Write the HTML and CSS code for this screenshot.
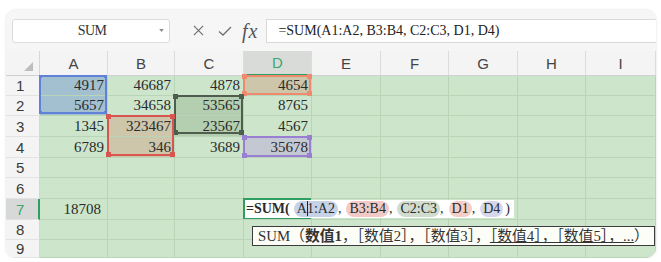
FILE: index.html
```html
<!DOCTYPE html>
<html lang="zh-CN">
<head>
    <meta charset="UTF-8">
    <title>SUM</title>
    <link rel="stylesheet" href="styles.css">
</head>
<body>
<div class="card">
    <div class="toolbar">
        <div class="namebox">
            <span class="name">SUM</span>
            <svg class="caret" viewBox="0 0 6 4"><path d="M0 0H6L3 4Z"/></svg>
        </div>
        <div class="tools">
            <svg class="icon icon-x" viewBox="0 0 12 12"><path d="M1 1L11 11M11 1L1 11"/></svg>
            <svg class="icon icon-ok" viewBox="0 0 14 10"><path d="M1 5.5L5 9L13 1"/></svg>
            <span class="fx">fx</span>
        </div>
        <div class="formula">=SUM(A1:A2, B3:B4, C2:C3, D1, D4)</div>
    </div>

    <div class="sheet">
        <div class="row head">
            <div class="corner"><svg viewBox="0 0 10 10"><path d="M10 0V10H0Z"/></svg></div>
            <div class="ch">A</div><div class="ch">B</div><div class="ch">C</div>
            <div class="ch active">D</div><div class="ch">E</div><div class="ch">F</div>
            <div class="ch">G</div><div class="ch">H</div><div class="ch">I</div>
        </div>
        <div class="row r20">
            <div class="rh">1</div>
            <div class="cell fill-blue host">4917
                <div class="range blue tall"><i class="tl"></i><i class="tr"></i><i class="bl"></i><i class="br"></i></div>
            </div>
            <div class="cell">46687</div>
            <div class="cell">4878</div>
            <div class="cell fill-tan host">4654
                <div class="range orange"><i class="tl"></i><i class="tr"></i><i class="bl"></i><i class="br"></i></div>
            </div>
            <div class="cell"></div><div class="cell"></div><div class="cell"></div><div class="cell"></div><div class="cell"></div>
        </div>
        <div class="row r20">
            <div class="rh">2</div>
            <div class="cell fill-blue">5657</div>
            <div class="cell">34658</div>
            <div class="cell fill-green host">53565
                <div class="range dark tall"><i class="tl"></i><i class="tr"></i><i class="bl"></i><i class="br"></i></div>
            </div>
            <div class="cell">8765</div>
            <div class="cell"></div><div class="cell"></div><div class="cell"></div><div class="cell"></div><div class="cell"></div>
        </div>
        <div class="row r21">
            <div class="rh">3</div>
            <div class="cell">1345</div>
            <div class="cell fill-tan host">323467
                <div class="range red tall"><i class="tl"></i><i class="tr"></i><i class="bl"></i><i class="br"></i></div>
            </div>
            <div class="cell fill-green">23567</div>
            <div class="cell">4567</div>
            <div class="cell"></div><div class="cell"></div><div class="cell"></div><div class="cell"></div><div class="cell"></div>
        </div>
        <div class="row r21">
            <div class="rh">4</div>
            <div class="cell">6789</div>
            <div class="cell fill-tan">346</div>
            <div class="cell">3689</div>
            <div class="cell fill-grey host">35678
                <div class="range purple"><i class="tl"></i><i class="tr"></i><i class="bl"></i><i class="br"></i></div>
            </div>
            <div class="cell"></div><div class="cell"></div><div class="cell"></div><div class="cell"></div><div class="cell"></div>
        </div>
        <div class="row r20">
            <div class="rh">5</div>
            <div class="cell"></div><div class="cell"></div><div class="cell"></div><div class="cell"></div>
            <div class="cell"></div><div class="cell"></div><div class="cell"></div><div class="cell"></div><div class="cell"></div>
        </div>
        <div class="row r21">
            <div class="rh">6</div>
            <div class="cell"></div><div class="cell"></div><div class="cell"></div><div class="cell"></div>
            <div class="cell"></div><div class="cell"></div><div class="cell"></div><div class="cell"></div><div class="cell"></div>
        </div>
        <div class="row r21">
            <div class="rh active">7</div>
            <div class="cell total">18708</div>
            <div class="cell"></div>
            <div class="cell"></div>
            <div class="cell edit">
                <div class="editor">
                    <b>=SUM(</b>
                    <span class="ref p-blue">A<span class="cursor"></span>1:A2</span><span class="sep">,</span>
                    <span class="ref p-red">B3:B4</span><span class="sep">,</span>
                    <span class="ref p-green">C2:C3</span><span class="sep">,</span>
                    <span class="ref p-orange">D1</span><span class="sep">,</span>
                    <span class="ref p-purple">D4</span><span class="close">)</span>
                </div>
                <div class="tip">SUM（<b>数值1</b>，［数值2］，［数值3］，<span class="more">［数值4］，［数值5］，...</span>）</div>
            </div>
            <div class="cell"></div><div class="cell"></div><div class="cell"></div><div class="cell"></div><div class="cell"></div>
        </div>
        <div class="row r20">
            <div class="rh">8</div>
            <div class="cell"></div><div class="cell"></div><div class="cell"></div><div class="cell"></div>
            <div class="cell"></div><div class="cell"></div><div class="cell"></div><div class="cell"></div><div class="cell"></div>
        </div>
        <div class="row last">
            <div class="rh">9</div>
            <div class="cell"></div><div class="cell"></div><div class="cell"></div><div class="cell"></div>
            <div class="cell"></div><div class="cell"></div><div class="cell"></div><div class="cell"></div><div class="cell"></div>
        </div>
    </div>
</div>
</body>
</html>
```

FILE: styles.css
```css
body {
    margin: 0;
    background-color: #fff;
    font-family: 'Liberation Serif', 'Noto Sans CJK SC', serif;
    color: #2b2b2b;
}
.card {
    margin: 10px 5px 0 6px;
    height: 248px;
    background-color: #f5f6f5;
    border-radius: 10px;
    overflow: hidden;
    box-shadow: 0 0 3px rgba(0, 0, 0, 0.12);
    display: flex;
    flex-direction: column;
}

/* toolbar */
.toolbar {
    display: flex;
    align-items: center;
    height: 42px;
    padding: 0 0 0 6px;
    box-sizing: border-box;
}
.namebox {
    width: 158px;
    height: 24px;
    box-sizing: border-box;
    background-color: #fff;
    border: 1px solid #dcdcdc;
    border-radius: 3px;
    display: flex;
    align-items: center;
    padding: 0 5px 0 12px;
}
.name {
    flex: 1;
    text-align: center;
    font-size: 14px;
    letter-spacing: -0.6px;
    color: #333;
}
.caret {
    width: 5px;
    height: 3px;
    fill: #888;
}
.tools {
    display: flex;
    align-items: center;
    margin-left: 23px;
}
.icon {
    fill: none;
    stroke: #6f6f6f;
    stroke-width: 1.3;
}
.icon-x {
    width: 11px;
    height: 11px;
}
.icon-ok {
    width: 14px;
    height: 10px;
    margin-left: 14px;
}
.fx {
    margin-left: 10px;
    font-size: 20px;
    font-style: italic;
    letter-spacing: 1px;
    color: #555;
    line-height: 1;
}
.formula {
    flex: 1;
    height: 24px;
    margin-left: 8px;
    box-sizing: border-box;
    background-color: #fff;
    border: 1px solid #dadada;
    border-right: none;
    padding-left: 11px;
    font-size: 14px;
    line-height: 22px;
    color: #222;
    white-space: nowrap;
}

/* grid */
.sheet {
    flex: 1;
    display: flex;
    flex-direction: column;
}
.row {
    display: grid;
    grid-template-columns: 34px 68px 67px 69px 68px 69px 68px 69px 68px 1fr;
}
.row.head { height: 25px; }
.row.r20 { height: 20px; }
.row.r21 { height: 21px; }
.row.last { flex: 1; }

.corner, .ch, .rh, .cell {
    box-sizing: border-box;
    display: flex;
    align-items: center;
}
.corner {
    background-color: #f3f4f3;
    border-right: 1px solid #d6d6d6;
    border-bottom: 1px solid #cfd1cf;
    justify-content: flex-end;
    align-items: flex-end;
    padding: 0 6px 4px 0;
}
.corner svg {
    width: 9px;
    height: 9px;
    fill: #bdbdbd;
}
.ch {
    justify-content: center;
    background-color: #f3f4f3;
    border-right: 1px solid #dcdcdc;
    border-bottom: 1px solid #cfd1cf;
    font-family: 'Liberation Sans', Arial, sans-serif;
    font-size: 15px;
    color: #444;
}
.ch.active {
    background-color: #d8dbd8;
    color: #3aa86c;
    border-bottom: 2px solid #2e9e63;
}
.rh {
    background-color: #f3f4f3;
    border-right: 1px solid #d6d6d6;
    border-bottom: 1px solid #e2e3e2;
    padding-left: 10px;
    font-family: 'Liberation Sans', Arial, sans-serif;
    font-size: 15px;
    color: #3a3a3a;
}
.rh.active {
    background-color: #d6d9d7;
    color: #3aa86c;
    border-right: 2px solid #2e9e63;
}
.cell {
    justify-content: flex-end;
    padding-right: 3px;
    background-color: #cce5cb;
    border-right: 1px solid #b8d5b7;
    border-bottom: 1px solid #b8d5b7;
    font-size: 15px;
    color: #2b2b2b;
    white-space: nowrap;
}
.cell.total {
    padding-right: 6px;
}

/* referenced ranges */
.fill-blue { background-color: #a3c0d1; }
.fill-tan { background-color: #cdc6ab; }
.fill-green { background-color: #b4ceb0; }
.fill-grey { background-color: #c3c8d2; }

.host {
    position: relative;
}
.range {
    position: absolute;
    left: -1px;
    top: -1px;
    width: calc(100% + 1px);
    height: calc(100% + 1px);
    box-sizing: border-box;
    border: 2px solid;
    z-index: 1;
}
.range.tall {
    height: calc(200% + 1px);
}
.range i {
    position: absolute;
    width: 5px;
    height: 5px;
    background-color: currentColor;
}
.range .tl { left: -3px; top: -3px; }
.range .tr { right: -3px; top: -3px; }
.range .bl { left: -3px; bottom: -3px; }
.range .br { right: -3px; bottom: -3px; }
.range.blue { color: #5f82d8; }
.range.blue i { width: 3px; height: 3px; }
.range.blue .tl, .range.blue .bl { left: -2px; }
.range.blue .tr, .range.blue .br { right: -2px; }
.range.blue .tl, .range.blue .tr { top: -2px; }
.range.blue .bl, .range.blue .br { bottom: -2px; }
.range.red { color: #d85650; }
.range.dark { color: #4f5d4f; }
.range.orange { color: #ee8a6d; }
.range.purple { color: #9a7ed4; }

/* cell being edited */
.cell.edit {
    position: relative;
    z-index: 2;
}
.cell.edit::before {
    content: '';
    position: absolute;
    left: -1px;
    top: -1px;
    right: 0;
    bottom: 0;
    border: 2px solid #2e9e63;
}
.editor {
    position: absolute;
    left: 1px;
    top: 1px;
    bottom: 1px;
    display: flex;
    align-items: center;
    padding: 0 4px 0 1px;
    background-color: #fff;
    font-size: 14px;
    color: #2b2b2b;
    white-space: nowrap;
}
.editor b {
    margin-right: 4px;
}
.ref {
    position: relative;
    padding: 0 3px;
    border-radius: 8px;
    line-height: 16px;
}
.p-blue { background-color: #c6d3e6; }
.p-red { background-color: #f2cac5; }
.p-green { background-color: #d0ddce; }
.p-orange { background-color: #f5cec8; }
.p-purple { background-color: #d6d7ea; }
.sep {
    margin: 0 5px 0 0;
}
.close {
    margin-left: 2px;
}
.cursor {
    display: inline-block;
    width: 1px;
    height: 15px;
    margin-right: -1px;
    vertical-align: -3px;
    background-color: #222;
}
.tip {
    position: absolute;
    left: 8px;
    top: 27px;
    height: 20px;
    box-sizing: border-box;
    padding: 0 5px 0 5px;
    background-color: #fdfdf7;
    border: 1px solid #3c3c3c;
    font-size: 14.8px;
    line-height: 18px;
    color: #333;
    white-space: nowrap;
}
.tip .more {
    text-decoration: underline;
}
```
